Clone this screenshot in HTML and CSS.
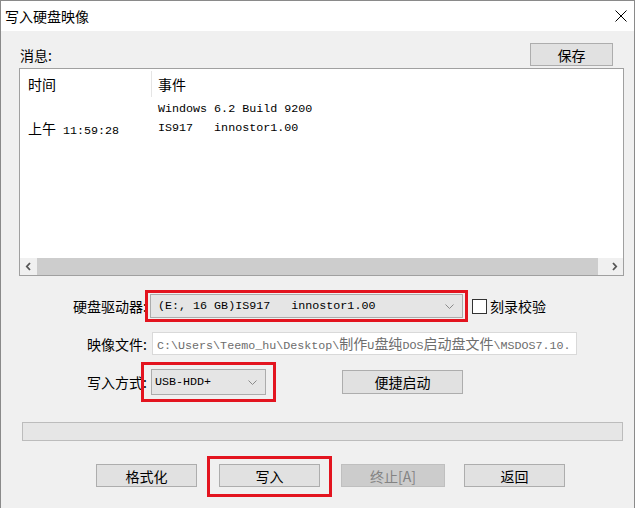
FILE: index.html
```html
<!DOCTYPE html>
<html lang="zh-CN">
<head>
    <meta charset="UTF-8">
    <title>写入硬盘映像</title>
    <link rel="stylesheet" href="styles.css">
</head>
<body>
    <div class="window">
        <div class="titlebar">
            <span class="title">写入硬盘映像</span>
            <svg class="close" width="12" height="12" viewBox="0 0 12 12">
                <path d="M0.5 0.5 L11.5 11.5 M11.5 0.5 L0.5 11.5" stroke="#000" stroke-width="1" fill="none"/>
            </svg>
        </div>

        <div class="content">
            <div class="msg-head">
                <span class="msg-label">消息:</span>
                <button class="btn save-btn">保存</button>
            </div>

            <div class="log">
                <div class="log-head">
                    <span class="col-time">时间</span>
                    <span class="col-event">事件</span>
                </div>
                <div class="log-rows">
                    <div class="log-row">
                        <span class="col-time"></span>
                        <span class="col-event mono">Windows 6.2 Build 9200</span>
                    </div>
                    <div class="log-row">
                        <span class="col-time">上午<span class="mono">&nbsp;11:59:28</span></span>
                        <span class="col-event mono">IS917&nbsp;&nbsp;&nbsp;innostor1.00</span>
                    </div>
                </div>
                <div class="hscroll">
                    <span class="arrow">
                        <svg width="7" height="9" viewBox="0 0 7 9"><path d="M5 1 L1.8 4.5 L5 8" stroke="#555" stroke-width="1.8" fill="none"/></svg>
                    </span>
                    <span class="track"><span class="thumb"></span></span>
                    <span class="arrow">
                        <svg width="7" height="9" viewBox="0 0 7 9"><path d="M2 1 L5.2 4.5 L2 8" stroke="#555" stroke-width="1.8" fill="none"/></svg>
                    </span>
                </div>
            </div>

            <div class="field field-drive">
                <label class="field-label">硬盘驱动器:</label>
                <div class="mark mark-drive">
                    <div class="select drive-select">
                        <span class="mono">(E:, 16 GB)IS917&nbsp;&nbsp;&nbsp;innostor1.00</span>
                        <svg class="chev" width="9" height="5" viewBox="0 0 9 5"><path d="M0.5 0.5 L4.5 4.5 L8.5 0.5" stroke="#8a8a8a" stroke-width="1" fill="none"/></svg>
                    </div>
                </div>
                <span class="checkbox"></span>
                <span class="check-label">刻录校验</span>
            </div>

            <div class="field field-image">
                <label class="field-label">映像文件:</label>
                <div class="path-box">
                    <span class="mono">C:\Users\Teemo_hu\Desktop\</span>制作<span class="mono">U</span>盘纯<span class="mono">DOS</span>启动盘文件<span class="mono">\MSDOS7.10.</span>
                </div>
            </div>

            <div class="field field-mode">
                <label class="field-label">写入方式:</label>
                <div class="mark mark-mode">
                    <div class="select mode-select">
                        <span class="mono">USB-HDD+</span>
                        <svg class="chev" width="9" height="5" viewBox="0 0 9 5"><path d="M0.5 0.5 L4.5 4.5 L8.5 0.5" stroke="#8a8a8a" stroke-width="1" fill="none"/></svg>
                    </div>
                </div>
                <button class="btn quick-btn">便捷启动</button>
            </div>

            <div class="progress"></div>

            <div class="actions">
                <button class="btn act-btn format-btn">格式化</button>
                <div class="mark mark-write">
                    <button class="btn act-btn">写入</button>
                </div>
                <button class="btn act-btn stop-btn" disabled>终止[A]</button>
                <button class="btn act-btn back-btn">返回</button>
            </div>
        </div>
    </div>
</body>
</html>
```

FILE: styles.css
```css
body {
    margin: 0;
    background-color: #fff;
    font-family: "Noto Sans CJK SC", "Microsoft YaHei", sans-serif;
    font-size: 14px;
    color: #000;
}
.window {
    width: 633px;
    height: 507px;
    border: 1px solid #8a8a8a;
    border-bottom: none;
    background-color: #f0f0f0;
    overflow: hidden;
}
.titlebar {
    height: 30px;
    background-color: #fff;
    display: flex;
    align-items: center;
    justify-content: space-between;
    padding: 0 7px 0 4px;
}
.title {
    line-height: 30px;
}
.mono {
    font-family: "Liberation Mono", monospace;
    font-size: 11.7px;
}
.content {
    padding: 12px 0 0 18px;
}
.btn {
    font-family: "Noto Sans CJK SC", sans-serif;
    font-size: 14px;
    background-color: #e1e1e1;
    border: 1px solid #adadad;
    padding: 0;
    color: #000;
    box-sizing: border-box;
}
.btn:disabled {
    background-color: #cccccc;
    border-color: #bfbfbf;
    color: #838383;
}
.msg-head {
    width: 594px;
    height: 23px;
    display: flex;
    align-items: center;
    justify-content: space-between;
}
.msg-label {
    padding-left: 1px;
}
.save-btn {
    width: 83px;
    height: 23px;
}
.log {
    margin-top: 2px;
    width: 605px;
    height: 208px;
    border: 1px solid #a0a0a0;
    box-sizing: border-box;
    background-color: #fff;
    display: flex;
    flex-direction: column;
}
.log-head {
    height: 30px;
    display: flex;
    align-items: center;
}
.col-time {
    width: 132px;
    box-sizing: border-box;
    padding-left: 8px;
    flex: none;
}
.col-event {
    padding-left: 6px;
}
.log-head .col-time {
    height: 26px;
    line-height: 26px;
    border-right: 1px solid #e5e5e5;
}
.log-rows {
    flex: 1;
}
.log-row {
    height: 19px;
    display: flex;
    align-items: center;
}
.hscroll {
    height: 17px;
    display: flex;
    background-color: #f0f0f0;
}
.arrow {
    width: 17px;
    display: flex;
    align-items: center;
    justify-content: center;
}
.track {
    flex: 1;
    display: flex;
}
.thumb {
    flex: 1;
    margin-right: 8px;
    background-color: #cdcdcd;
}
.field {
    display: flex;
    align-items: center;
}
.field-label {
    width: 128px;
    flex: none;
    text-align: right;
}
.field-drive {
    margin-top: 14px;
    height: 32px;
}
.field-image {
    margin-top: 10px;
    height: 23px;
}
.field-mode {
    margin-top: 7px;
    height: 40px;
}
.mark {
    border: 3px solid #e3141f;
}
.mark-drive {
    margin-left: -2px;
    padding: 1px 2px;
}
.mark-mode {
    margin-left: -6px;
    padding: 4px 7px;
}
.mark-write {
    padding: 5px 9px 7px 9px;
    margin-left: 10px;
}
.select {
    box-sizing: border-box;
    background-color: #e5e5e5;
    border: 1px solid #acacac;
    display: flex;
    align-items: center;
    justify-content: space-between;
    padding: 0 8px 0 7px;
}
.drive-select {
    width: 313px;
    height: 24px;
}
.mode-select {
    width: 115px;
    height: 26px;
    padding-left: 3px;
}
.checkbox {
    width: 13px;
    height: 13px;
    border: 1px solid #333;
    background-color: #fff;
    margin-left: 4px;
}
.check-label {
    margin-left: 3px;
}
.path-box {
    margin-left: 5px;
    width: 425px;
    height: 23px;
    box-sizing: border-box;
    border: 1px solid #d9d9d9;
    background-color: #fff;
    color: #6d6d6d;
    padding-left: 4px;
    line-height: 21px;
    white-space: nowrap;
    overflow: hidden;
}
.quick-btn {
    margin-left: 66px;
    width: 121px;
    height: 24px;
}
.progress {
    margin: 20px 0 0 3px;
    width: 601px;
    height: 19px;
    box-sizing: border-box;
    border: 1px solid #bcbcbc;
    background-color: #e6e6e6;
}
.actions {
    margin-top: 15px;
    padding-left: 77px;
    height: 41px;
    display: flex;
    align-items: flex-start;
}
.act-btn {
    width: 101px;
    height: 23px;
}
.format-btn,
.stop-btn,
.back-btn {
    margin-top: 8px;
}
.stop-btn {
    margin-left: 9px;
    width: 104px;
}
.back-btn {
    margin-left: 19px;
}
```
